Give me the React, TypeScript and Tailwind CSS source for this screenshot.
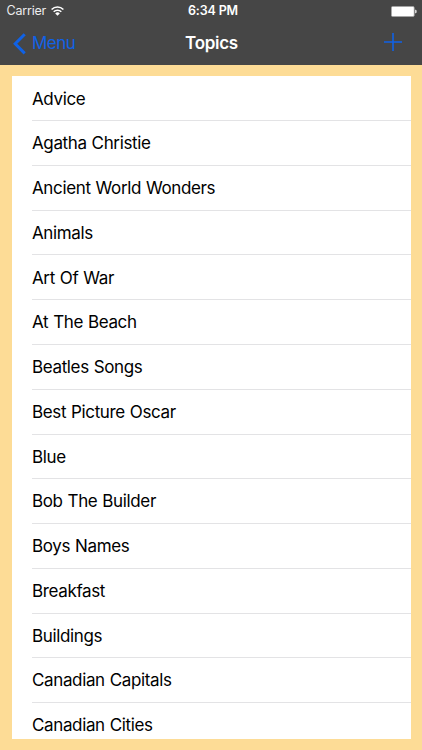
import React from 'react';

const TOPICS = [
  'Advice', 'Agatha Christie', 'Ancient World Wonders', 'Animals', 'Art Of War',
  'At The Beach', 'Beatles Songs', 'Best Picture Oscar', 'Blue', 'Bob The Builder',
  'Boys Names', 'Breakfast', 'Buildings', 'Canadian Capitals', 'Canadian Cities',
];

const WifiIcon: React.FC = () => (
  <svg width="13" height="10" viewBox="0 0 13 10" fill="none" stroke="#fff" strokeWidth="1.6">
    <path d="M0.6 3.5a8.3 8.3 0 0 1 11.8 0" />
    <path d="M2.7 5.8a5.4 5.4 0 0 1 7.6 0" />
    <path d="M4.2 7.4a3.2 3.2 0 0 1 4.6 0L6.5 9.8z" fill="#fff" stroke="none" />
  </svg>
);

const BatteryIcon: React.FC = () => (
  <svg width="26" height="11" viewBox="0 0 26 11">
    <rect x="0.4" y="0.5" width="22.8" height="10" rx="1.3" fill="#fff" stroke="#a3a3a3" strokeWidth="0.7" />
    <path d="M24 3.8h0.7c0.7 0 1 0.7 1 1.7s-0.3 1.7-1 1.7H24z" fill="#d4d4d4" />
  </svg>
);

const App: React.FC = () => {
  return (
    <div className="w-[422px] h-[750px] flex flex-col bg-[#fddc96] font-['Inter',sans-serif] overflow-hidden">
      <header className="h-[65px] shrink-0 bg-[#464646]">
        {/* Status bar */}
        <div className="h-[22px] grid grid-cols-3 items-center pl-[6.5px] pr-[5.5px] text-[12.5px] text-white">
          <div className="flex items-center gap-[5px]">
            <span className="pt-px tracking-[-0.2px] text-[#ededed]">Carrier</span>
            <span className="pb-px"><WifiIcon /></span>
          </div>
          <span className="pt-px pl-[3px] text-center font-semibold tracking-[-0.15px]">6:34 PM</span>
          <div className="flex justify-end"><BatteryIcon /></div>
        </div>

        {/* Navigation bar */}
        <div className="h-[43px] grid grid-cols-3 items-center pl-[13px] pr-5 text-[17px]">
          <button className="flex items-center gap-[6px] text-[#1062e6] tracking-[-0.5px]">
            <svg width="13" height="22" viewBox="0 0 13 22" fill="none" stroke="currentColor" strokeWidth="3">
              <path d="M11.7 1.2 2.2 10.8l9.5 9.6" />
            </svg>
            Menu
          </button>
          <h1 className="pl-[8px] text-center font-semibold text-white tracking-[-0.3px]">Topics</h1>
          <button aria-label="Add" className="flex justify-end pb-[3px] text-[#1062e6]">
            <svg width="18" height="18" viewBox="0 0 18 18" stroke="currentColor" strokeWidth="1.6">
              <path d="M0 9h18M9 0v18" />
            </svg>
          </button>
        </div>
      </header>

      <main className="flex-1 min-h-0 py-[11px] pl-[11.5px] pr-[11.5px]">
        <ul className="h-full bg-white overflow-hidden pt-[0.4px] pl-[20.5px]">
          {TOPICS.map((topic) => (
            <li key={topic} className="h-[44.77px] flex items-center pt-[2px] border-b border-[#e3e3e5] text-[17px] tracking-[-0.36px] [word-spacing:0.5px] text-black">
              {topic}
            </li>
          ))}
        </ul>
      </main>
    </div>
  );
};

export default App;
